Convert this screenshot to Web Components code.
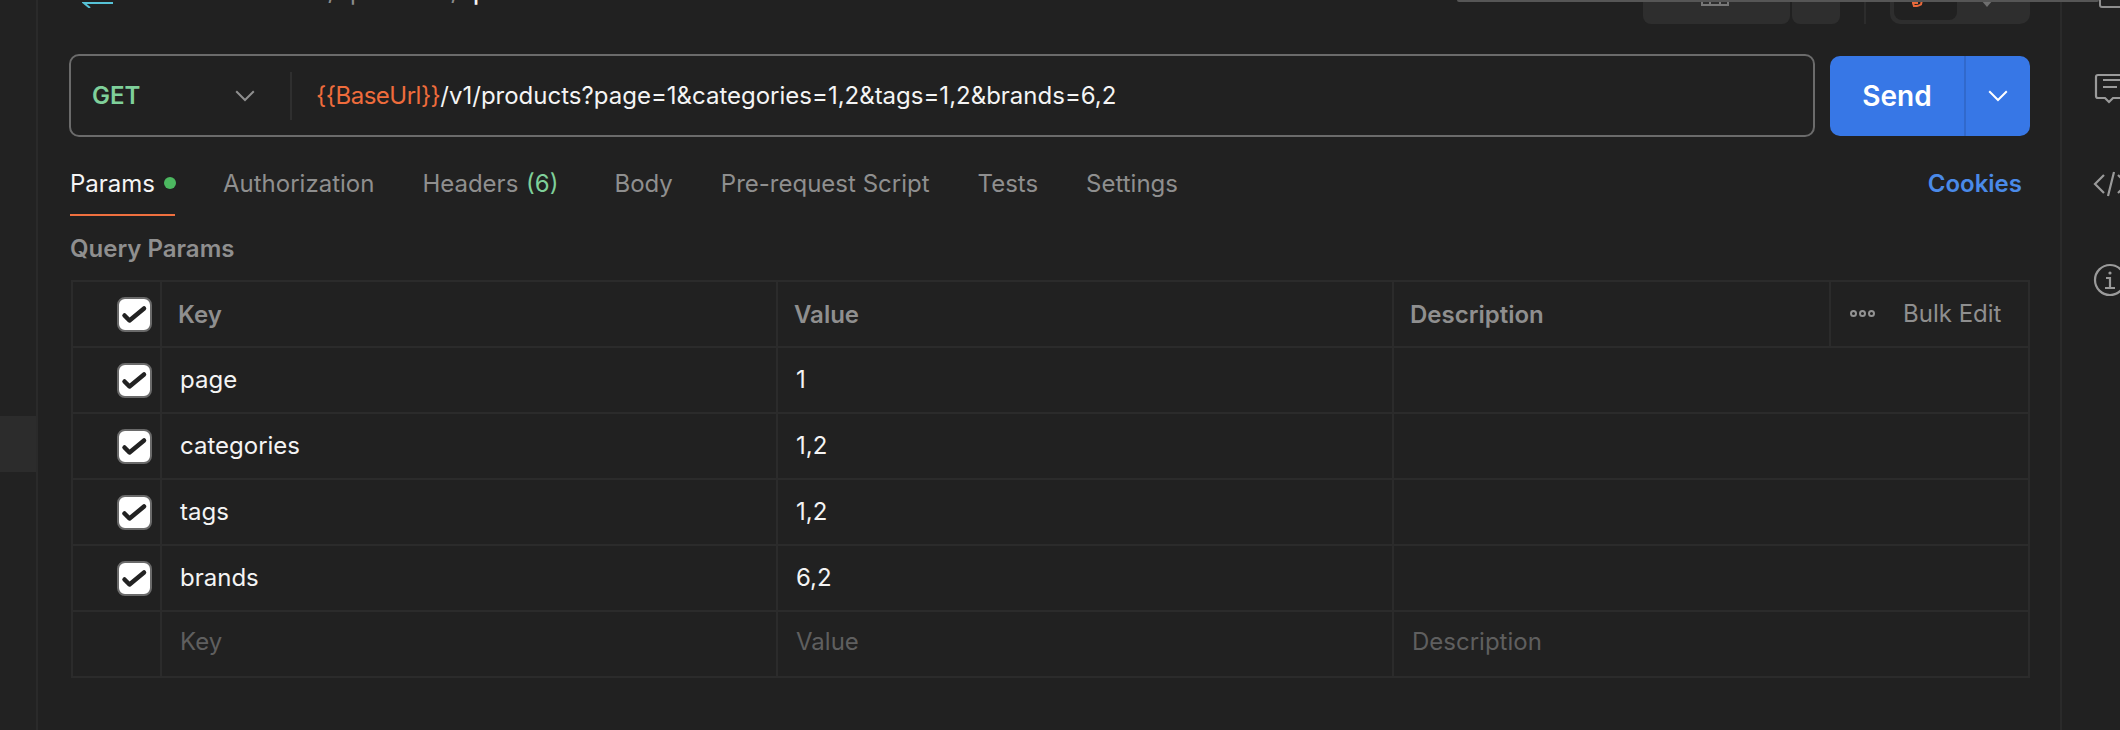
<!DOCTYPE html>
<html><head><meta charset="utf-8">
<style>
html,body{margin:0;height:100%;background:#212121;overflow:hidden}
body{font-family:Inter,"Liberation Sans",sans-serif;color:#f2f2f2;font-size:24px}
</style></head><body>
<pm-app></pm-app>
<script>
const chev=(w,c,sw)=>`<svg width="${w}" height="${w*0.6}" viewBox="0 0 20 12" fill="none" stroke="${c}" stroke-width="${sw}"><path d="M2 2l8 8 8-8"/></svg>`;
function def(name,html,init){customElements.define(name,class extends HTMLElement{
  connectedCallback(){ if(this.shadowRoot)return; const r=this.attachShadow({mode:'open'}); r.innerHTML=typeof html==='function'?html(this):html; init&&init(r,this);} });}

def('pm-left-rail',`<style>
:host{display:flex;flex-direction:column;width:36px;border-right:2px solid #2a2a2a;background:#222;flex:none;padding-top:416px;box-sizing:content-box}
.sel{height:56px;background:#2c2c2c}
</style><div class="sel"></div>`);

def('pm-right-rail',`<style>
:host{display:block;flex:none;width:58px;border-left:2px solid #2a2a2a;overflow:hidden;padding-left:0}
.i{height:96px;display:flex;align-items:center;padding-left:32px}
.i:first-of-type{margin-top:-56px}
svg{display:block;flex:none;overflow:visible}
</style>
<div class="i"><svg width="36" height="36" viewBox="0 0 36 36" fill="none" stroke="#8e8e8e" stroke-width="2"><path d="M6 3v28a2 2 0 0 0 2 2h28"/></svg></div>
<div class="i"><svg width="36" height="30" viewBox="0 0 36 30" fill="none" stroke="#9a9a9a" stroke-width="2.2" style="margin-left:-1px"><path d="M36 2H5a2 2 0 0 0-2 2v19a2 2 0 0 0 2 2h7l4 4 4-4h16M10 7h26M10 14h14"/></svg></div>
<div class="i"><svg width="36" height="26" viewBox="0 0 36 26" fill="none" stroke="#9a9a9a" stroke-width="2.2" style="margin-left:-1px"><path d="M11 4L2 13l9 9M21 1l-6 24M25 4l9 9-9 9"/></svg></div>
<div class="i"><svg width="34" height="34" viewBox="0 0 34 34" fill="none" stroke="#9a9a9a" stroke-width="2.2" style="margin-left:-1px"><circle cx="17" cy="17" r="15"/><circle cx="17" cy="10" r="1.6" fill="#9a9a9a" stroke="none"/><path d="M13 15h4v10M12 25h10"/></svg></div>`);

def('pm-top-strip',`<style>
:host{display:flex;height:24px;flex:none;align-items:flex-start;overflow:hidden;margin:0 -30px 0 -31px}
.back{flex:none;margin-left:44px;width:32px;height:8px;display:block}
.crumb{flex:none;margin:-23px 0 0 50px;line-height:30px;font-size:24px;color:#8c8c8c;white-space:pre;display:flex}
.crumb b{font-weight:500;color:#f4f4f4}
.crumb span{display:block}
.s1{width:156px}
.sl{width:22px;padding-left:8px;box-sizing:content-box}
.s2{width:93px}
.sp{flex:1}
.btn{background:#2e2e2e;height:24px;flex:none;overflow:hidden}
.a{width:147px;border-radius:0 0 8px 8px;display:flex;justify-content:center}
.a svg{margin-left:-3px}
.b{width:48px;margin-left:2px;border-radius:0 0 8px 8px}
.d{width:2px;height:24px;background:#2c2c2c;margin:0 24px;flex:none}
.g{width:140px;border-radius:0 0 10px 10px;display:flex;position:relative}
.in{width:63px;height:20px;margin-left:4px;background:#212121;border-radius:0 0 8px 8px;display:flex;padding-left:18px;box-sizing:border-box}
.tip{position:absolute;left:91px;top:0}
</style>
<svg class="back" viewBox="0 0 32 8" fill="none" stroke="#56c2d6" stroke-width="2"><path d="M31 3H2l6 5"/></svg>
<div class="crumb"><span class="s1">E-commerce</span><span class="sl">/</span><span class="s2">product</span><span class="sl">/</span><b>product list</b></div>
<div class="sp"></div>
<div class="btn a"><svg width="28" height="6" viewBox="0 0 28 6" fill="none" stroke="#777" stroke-width="2"><path d="M1 0v5h26V0M9 0v5M19 0v5"/></svg></div>
<div class="btn b"></div>
<div class="d"></div>
<div class="btn g"><div class="in"><svg width="12" height="7" viewBox="0 0 12 7" fill="none" stroke="#e8683a" stroke-width="2"><path d="M10 0L9 4.500Q6 6.500 2 6L1 3h5"/></svg></div><svg class="tip" width="12" height="7" viewBox="0 0 12 7"><path d="M0 0h12L6 7z" fill="#6e6e6e"/></svg></div>
<div style="width:30px;flex:none"></div>`);

def('pm-url-bar',`<style>
:host{display:flex;height:83px;flex:1;box-sizing:border-box;border:2px solid #6b6b6b;border-radius:10px;align-items:center;min-width:0}
.m{width:219px;box-sizing:border-box;padding-left:21px;display:flex;align-items:center;justify-content:space-between;padding-right:34px;color:#7fd09a;font-weight:600;font-size:24px;flex:none}
.v{width:2px;height:48px;background:#2f2f2f;flex:none}
.u{padding-left:24px;white-space:pre;font-size:24px;color:#f4f4f4}
.u i{font-style:normal;color:#ef6c3c;letter-spacing:-.5px}
svg{display:block}
</style>
<div class="m"><span>GET</span>${chev(22,'#8f8f8f',1.8)}</div><div class="v"></div>
<div class="u"><i>{{BaseUrl}}</i>/v1/products?page=1&amp;categories=1,2&amp;tags=1,2&amp;brands=6,2</div>`);

def('pm-send',`<style>
:host{display:flex;width:200px;height:80px;margin-left:15px;flex:none;background:#3777e6;border-radius:10px;color:#fff;align-items:stretch}
.s{width:134px;border-right:2px solid #3169cc;display:flex;align-items:center;justify-content:center;font-weight:600;font-size:28px;box-sizing:content-box}
.c{flex:1;display:flex;align-items:center;justify-content:center}
svg{display:block}
</style><div class="s">Send</div><div class="c">${chev(22,'#fff',1.8)}</div>`);

def('pm-tabs',`<style>
:host{display:flex;height:79px;box-sizing:border-box;align-items:flex-start;padding-left:1px;font-size:24px;color:#8f8f8f;white-space:pre;flex:none}
.t{display:flex;align-items:center;height:60px;margin-top:19px;box-sizing:border-box;flex:none;padding-bottom:6px}
.on{color:#f5f5f5;border-bottom:2px solid #f0703f;width:105px;padding-bottom:4px}
.dot{width:12px;height:12px;border-radius:50%;background:#4cb860;margin-left:9px;flex:none}
.g{color:#7fd09a;margin-left:1px}
.sp{flex:1}
.ck{color:#4a8ae8;font-weight:600;margin-right:8px}
</style>
<div class="t on"><span>Params</span><span class="dot"></span></div>
<div class="t" style="margin-left:48px">Authorization</div>
<div class="t" style="margin-left:48px">Headers <span class="g">(6)</span></div>
<div class="t" style="margin-left:56px">Body</div>
<div class="t" style="margin-left:48px">Pre-request Script</div>
<div class="t" style="margin-left:48px">Tests</div>
<div class="t" style="margin-left:48px">Settings</div>
<div class="sp"></div><div class="t ck">Cookies</div>`);

def('pm-check',`<style>
:host{display:block;width:35px;height:35px;box-sizing:border-box;border:2px solid #6a6a6a;border-radius:8px;background:#fff;flex:none}
svg{display:block;margin:-2px}
</style><svg width="35" height="35" viewBox="0 0 35 35" fill="none" stroke="#222" stroke-width="4.500" stroke-linecap="round" stroke-linejoin="round"><path d="M7.500 18.500L12.500 23.500L27 11.500"/></svg>`);

def('pm-row',(h)=>{
 const head=h.hasAttribute('head'),ph=h.hasAttribute('ph'),chk=h.hasAttribute('check');
 const k=h.getAttribute('k'),v=h.getAttribute('v'),d=h.getAttribute('d')||'';
 return `<style>
:host{display:grid;grid-template-columns:89px 616px 616px 1fr;height:66px;box-sizing:border-box;border-bottom:2px solid #2b2b2b;border-left:2px solid #2b2b2b;border-right:2px solid #2b2b2b;font-size:24px;color:${head?'#8f8f8f':ph?'#5f5f5f':'#f4f4f4'};font-weight:${head?600:400}}
.c{border-right:2px solid #2b2b2b;display:flex;align-items:center;min-width:0;box-sizing:border-box;padding-left:${head?16:18}px;padding-bottom:${ph?5:head?0:2}px}
.c0{justify-content:flex-end;padding:0 8px 0 0}
.c:last-child{border-right:0;padding-right:0}
.bulk{margin-left:auto;width:199px;height:100%;box-sizing:border-box;border-left:2px solid #2b2b2b;display:flex;align-items:center;font-weight:400;padding-left:19px;padding-bottom:2px;flex:none}
.dots{display:flex;gap:2px;margin-right:28px}
.dots i{display:block;width:7px;height:7px;border-radius:50%;border:2px solid #929292;box-sizing:border-box}
</style>
<div class="c c0">${chk?'<pm-check></pm-check>':''}</div>
<div class="c">${k}</div><div class="c">${v}</div>
<div class="c">${d}${head?'<div class="bulk"><span class="dots"><i></i><i></i><i></i></span>Bulk Edit</div>':''}</div>`;
});

def('pm-params',`<style>
:host{display:block;margin-left:2px;flex:none}
.l{height:64px;box-sizing:border-box;display:flex;align-items:center;margin-left:-1px;font-weight:600;font-size:24px;color:#8f8f8f}
.tb{border-top:2px solid #2b2b2b}
</style>
<div class="l">Query Params</div>
<div class="tb">
<pm-row head check k="Key" v="Value" d="Description"></pm-row>
<pm-row check k="page" v="1"></pm-row>
<pm-row check k="categories" v="1,2"></pm-row>
<pm-row check k="tags" v="1,2"></pm-row>
<pm-row check k="brands" v="6,2"></pm-row>
<pm-row ph k="Key" v="Value" d="Description"></pm-row>
</div>`);

def('pm-app',`<style>
:host{display:flex;width:2120px;height:730px;overflow:hidden;position:relative}
main{flex:1;min-width:0;display:flex;flex-direction:column;padding:0 30px 0 31px}
.r{display:flex;align-items:center;margin-top:30px;flex:none}
.over{position:absolute;left:1457px;top:0;width:642px;height:2px;background:#565656;border-radius:0 0 6px 6px}
</style>
<pm-left-rail></pm-left-rail>
<main><pm-top-strip></pm-top-strip><div class="r"><pm-url-bar></pm-url-bar><pm-send></pm-send></div><pm-tabs></pm-tabs><pm-params></pm-params></main>
<pm-right-rail></pm-right-rail>
<div class="over"></div>`);
</script>
</body></html>
